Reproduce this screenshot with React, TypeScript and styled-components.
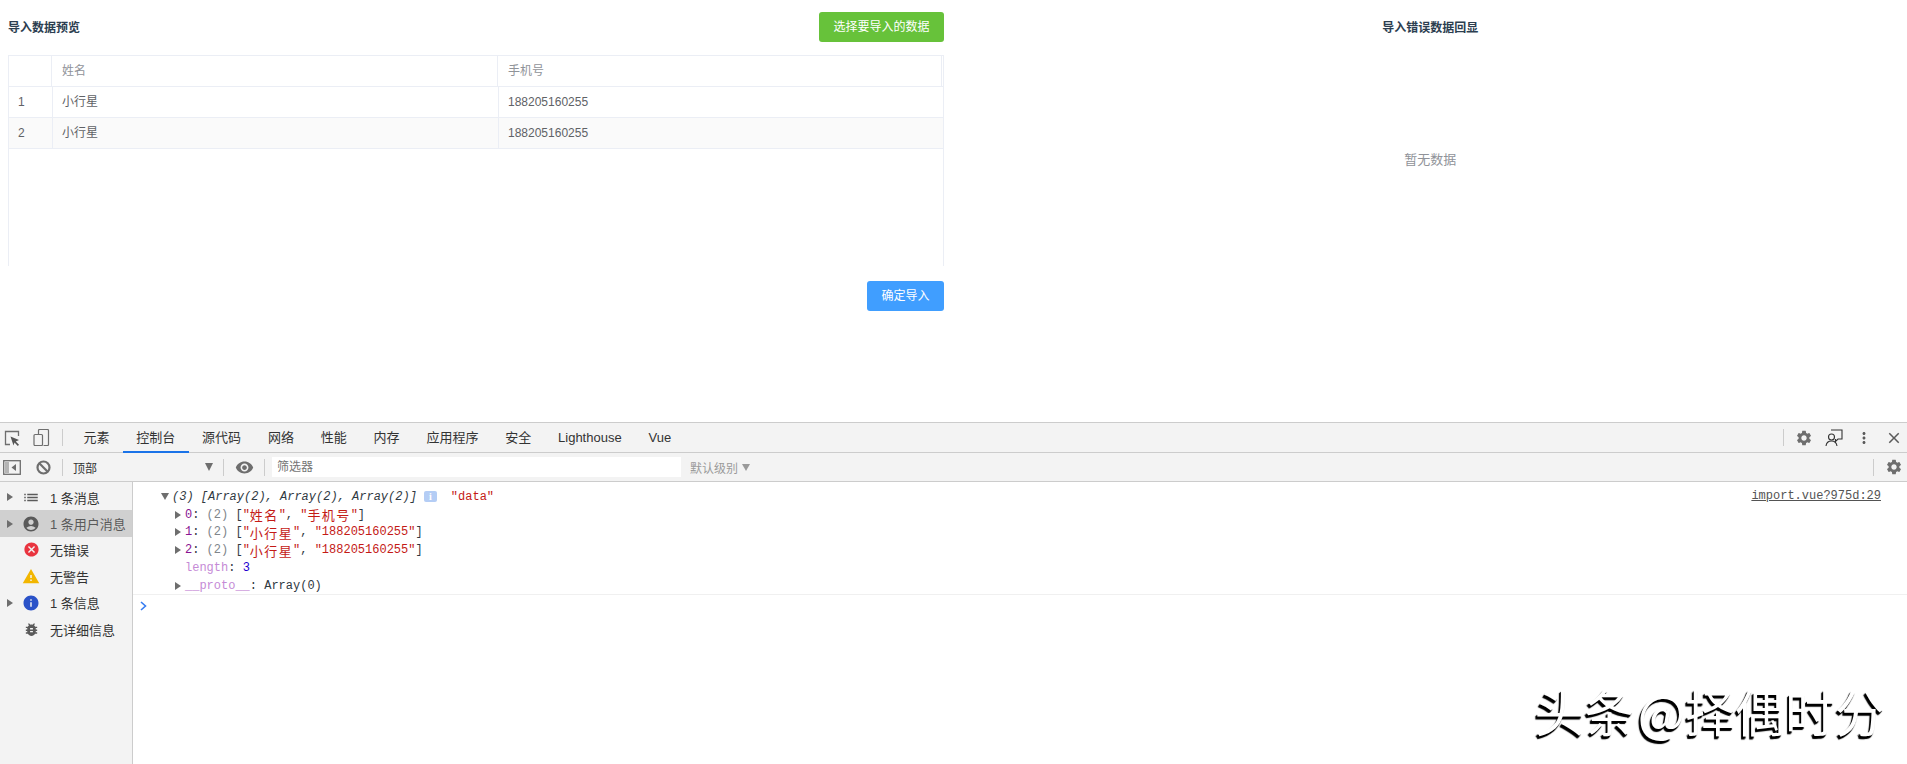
import React from "react";
import styled, { createGlobalStyle } from "styled-components";
import {
  MdSettings, MdMoreVert, MdClose, MdVisibility, MdList,
  MdAccountCircle, MdBugReport, MdCancel, MdWarning, MdInfo,
} from "react-icons/md";

const Global = createGlobalStyle`
  html, body { margin: 0; padding: 0; background: #fff; }
  body { font-family: "Liberation Sans", "Noto Sans CJK SC", sans-serif; }
`;

const Page = styled.div`
  position: relative;
  width: 1907px;
  height: 764px;
  overflow: hidden;
  display: flex;
  flex-direction: column;
`;

const Top = styled.div`
  height: 422px;
  display: grid;
  grid-template-columns: 953.5px 1fr;
  flex: none;
`;

const LeftPanel = styled.section`
  padding: 12px 9.5px 0 8px;
  display: flex;
  flex-direction: column;
`;

const HeaderRow = styled.div`
  display: flex;
  justify-content: space-between;
  align-items: center;
  height: 30px;
  margin-bottom: 13px;
`;

const PanelTitle = styled.h3`
  margin: 0;
  padding-top: 1px;
  font-size: 12px;
  font-weight: 700;
  line-height: 30px;
  color: #2c3e50;
`;

const ActionButton = styled.button<{ $bg: string }>`
  height: 30px;
  padding: 0 14.5px;
  border: 0;
  border-radius: 3px;
  background: ${(p) => p.$bg};
  color: #fff;
  font: inherit;
  font-size: 12px;
  line-height: 30px;
`;

const TableBox = styled.div`
  height: 211px;
  box-sizing: border-box;
  border: 1px solid #ebeef5;
  border-bottom: 0;
`;

const HeadRow = styled.div`
  display: grid;
  grid-template-columns: 43px 446px 1fr;
  height: 31px;
  box-sizing: border-box;
  border-bottom: 1px solid #ebeef5;
  padding-right: 1px;
`;

const HeadCell = styled.div`
  box-sizing: border-box;
  padding: 0 10px;
  border-right: 1px solid #ebeef5;
  font-size: 12px;
  font-weight: 400;
  line-height: 30px;
  color: #909399;
`;

const BodyRow = styled.div<{ $striped?: boolean }>`
  display: grid;
  grid-template-columns: 44px 446px 1fr;
  height: 31px;
  box-sizing: border-box;
  border-bottom: 1px solid #ebeef5;
  background: ${(p) => (p.$striped ? "#fafafa" : "#fff")};
`;

const BodyCell = styled.div`
  box-sizing: border-box;
  padding: 0 9px;
  border-right: 1px solid #ebeef5;
  font-size: 12px;
  line-height: 30px;
  color: #606266;
  &:last-child { border-right: 0; }
`;

const FooterRow = styled.div`
  display: flex;
  justify-content: flex-end;
  margin-top: 15px;
`;

const RightPanel = styled.section`
  padding-top: 12px;
  display: flex;
  flex-direction: column;
  align-items: center;
`;

const EmptyText = styled.div`
  margin-top: 107px;
  font-size: 13px;
  line-height: 20px;
  color: #909399;
`;

const DevTools = styled.div`
  flex: 1;
  display: flex;
  flex-direction: column;
  border-top: 1px solid #cccccc;
  font-family: "Liberation Sans", "Noto Sans CJK SC", sans-serif;
  color: #333;
  min-height: 0;
`;

const TabBar = styled.div`
  height: 29px;
  flex: none;
  display: flex;
  align-items: center;
  background: #f3f3f3;
  border-bottom: 1px solid #cccccc;
`;

const FilterBar = styled.div`
  height: 28px;
  flex: none;
  display: flex;
  align-items: center;
  background: #f3f3f3;
  border-bottom: 1px solid #cccccc;
`;

const Slot = styled.span<{ $left: number; $w: number; $color?: string }>`
  display: inline-flex;
  align-items: center;
  justify-content: center;
  flex: none;
  width: ${(p) => p.$w}px;
  margin-left: ${(p) => p.$left}px;
  color: ${(p) => p.$color ?? "#6e6e6e"};
`;

const Sep = styled.span<{ $left: number }>`
  flex: none;
  width: 1px;
  height: 17px;
  margin-left: ${(p) => p.$left}px;
  background: #cccccc;
`;

const TabList = styled.div`
  display: flex;
  height: 100%;
  margin-left: 7px;
`;

const Tab = styled.div<{ $active?: boolean }>`
  padding: 0 13.42px;
  font-size: 13px;
  line-height: 29px;
  height: 30px;
  box-sizing: border-box;
  color: #333;
  border-bottom: 2px solid ${(p) => (p.$active ? "#1a73e8" : "transparent")};
`;

const Push = styled.div`
  margin-left: auto;
  display: flex;
  align-items: center;
`;

const ContextSelect = styled.div`
  width: 141px;
  margin-left: 10px;
  display: flex;
  justify-content: space-between;
  align-items: center;
  font-size: 12px;
  color: #333;
`;

const SmallArrow = styled.span`
  width: 0;
  height: 0;
  margin-right: 1px;
  border-left: 4.5px solid transparent;
  border-right: 4.5px solid transparent;
  border-top: 8px solid #6e6e6e;
`;

const FilterInput = styled.div`
  width: 409px;
  height: 20px;
  margin-left: 7px;
  padding-left: 5px;
  box-sizing: border-box;
  background: #fff;
  font-size: 12px;
  line-height: 20px;
  color: #757575;
`;

const LevelText = styled.div`
  margin-left: 9px;
  display: flex;
  align-items: center;
  gap: 4px;
  font-size: 12px;
  color: #9a9a9a;
`;

const GreyArrow = styled.span`
  width: 0;
  height: 0;
  border-left: 4.5px solid transparent;
  border-right: 4.5px solid transparent;
  border-top: 7px solid #9a9a9a;
`;

const ConsoleArea = styled.div`
  flex: 1;
  display: grid;
  grid-template-columns: 133px 1fr;
  min-height: 0;
`;

const Sidebar = styled.aside`
  background: #f3f3f3;
  border-right: 1px solid #cccccc;
  padding-top: 2px;
`;

const SideRow = styled.div<{ $selected?: boolean }>`
  height: 26.4px;
  display: grid;
  grid-template-columns: 13px 18px 1fr;
  align-items: center;
  column-gap: 9px;
  background: ${(p) => (p.$selected ? "#d0d0d0" : "transparent")};
  font-size: 13px;
  color: ${(p) => (p.$selected ? "#5a5a5a" : "#333")};
  white-space: nowrap;
`;

const TriCell = styled.span`
  display: flex;
  justify-content: flex-end;
`;

const RightTri = styled.span<{ $hide?: boolean }>`
  width: 0;
  height: 0;
  border-top: 4.5px solid transparent;
  border-bottom: 4.5px solid transparent;
  border-left: 6px solid ${(p) => (p.$hide ? "transparent" : "#6e6e6e")};
`;

const SideIcon = styled.span<{ $color: string }>`
  display: flex;
  align-items: center;
  justify-content: center;
  color: ${(p) => p.$color};
`;

const SideLabel = styled.span`
  margin-left: 1px;
`;

const Output = styled.main`
  background: #fff;
  min-width: 0;
  padding-top: 6px;
  font-family: "Liberation Mono", "Noto Sans CJK SC", monospace;
  font-size: 12px;
  color: #303942;
`;

const Message = styled.div`
  position: relative;
  border-bottom: 1px solid #f0f0f0;
  height: 106px;
`;

const LogLine = styled.div<{ $indent: number }>`
  display: flex;
  align-items: center;
  height: 17.8px;
  padding-left: ${(p) => p.$indent}px;
  white-space: pre;
`;

const DownTri = styled.span`
  width: 0;
  height: 0;
  margin-right: 3px;
  border-left: 4px solid transparent;
  border-right: 4px solid transparent;
  border-top: 7px solid #6e6e6e;
`;

const LineTri = styled.span`
  width: 0;
  height: 0;
  margin-right: 4px;
  border-top: 4.5px solid transparent;
  border-bottom: 4.5px solid transparent;
  border-left: 6px solid #6e6e6e;
`;

const Summary = styled.span`
  font-style: italic;
  color: #303942;
`;

const InfoBadge = styled.span`
  width: 13px;
  height: 11px;
  margin: 0 14px 0 7px;
  border-radius: 2px;
  background: #b4cdf5;
  color: #fff;
  font: 700 10px/11px "Liberation Serif", serif;
  text-align: center;
`;

const Str = styled.span`
  color: #c41a16;
`;

const Cjk = styled.span`
  color: #c41a16;
  font-size: 13px;
  letter-spacing: 1.4px;
`;

const Key = styled.span<{ $dim?: boolean }>`
  color: ${(p) => (p.$dim ? "#c58ad6" : "#881391")};
`;

const Grey = styled.span`
  color: #80868b;
`;

const Num = styled.span`
  color: #1c00cf;
`;

const SourceLink = styled.span`
  position: absolute;
  right: 26px;
  top: 0;
  line-height: 17.8px;
  text-decoration: underline;
  color: #545454;
`;

const Prompt = styled.div`
  padding: 6px 0 0 7px;
  line-height: 0;
  color: #367cf1;
`;

const Watermark = styled.div`
  position: absolute;
  right: 22px;
  bottom: 24px;
  font-family: "Noto Sans CJK SC", sans-serif;
  font-size: 50px;
  font-weight: 400;
  line-height: 60px;
  word-spacing: -8px;
  white-space: pre;
  color: #fff;
  text-shadow: -1px 2px 1px #000, -2px 3px 1px #000;
`;

const InspectIcon = () => (
  <svg width="16" height="16" viewBox="0 0 16 16" fill="none">
    <path d="M6 14.5H1.5V1.5H14.5V6" stroke="#6e6e6e" strokeWidth="1.3" />
    <path d="M6.5 6.5L15 10L11.8 11.5L15 14.8L13.8 16L10.5 12.5L9.5 15.5Z" fill="#555" />
  </svg>
);

const DeviceIcon = () => (
  <svg width="17" height="17" viewBox="0 0 17 17" fill="none">
    <path d="M5.5 5.5V1.5a1 1 0 0 1 1-1h8a1 1 0 0 1 1 1v14a1 1 0 0 1-1 1h-4" stroke="#6e6e6e" strokeWidth="1.2" />
    <rect x="1" y="5.5" width="8.5" height="11" rx="1" stroke="#6e6e6e" strokeWidth="1.2" />
  </svg>
);

const FeedbackIcon = () => (
  <svg width="18" height="18" viewBox="0 0 18 18" fill="none">
    <path d="M6 1H17V10H13L10.5 12.5V10" stroke="#333" strokeWidth="1.1" />
    <circle cx="6.5" cy="8" r="3" stroke="#333" strokeWidth="1.1" />
    <path d="M1 17c.4-3.2 2.6-5 5.5-5s5 1.8 5.5 5" stroke="#333" strokeWidth="1.1" />
  </svg>
);

const DockIcon = () => (
  <svg width="18" height="15" viewBox="0 0 18 15" fill="none">
    <rect x="0.7" y="0.7" width="16.6" height="13.6" stroke="#6e6e6e" strokeWidth="1.3" />
    <rect x="2" y="2" width="4" height="11" fill="#b5b5b5" />
    <path d="M13 4V11L8.5 7.5Z" fill="#6e6e6e" />
  </svg>
);

const BlockIcon = () => (
  <svg width="15" height="15" viewBox="0 0 15 15" fill="none">
    <circle cx="7.5" cy="7.5" r="6" stroke="#6e6e6e" strokeWidth="2.2" />
    <path d="M3.3 3.3L11.7 11.7" stroke="#6e6e6e" strokeWidth="2.2" />
  </svg>
);

const Chevron = () => (
  <svg width="7" height="10" viewBox="0 0 7 10" fill="none">
    <path d="M1 1L5.5 5L1 9" stroke="#367cf1" strokeWidth="1.6" />
  </svg>
);

const tabs = ["元素", "控制台", "源代码", "网络", "性能", "内存", "应用程序", "安全", "Lighthouse", "Vue"];

const sideItems = [
  { label: "1 条消息", color: "#5a5a5a", icon: <MdList size={19} />, tri: true },
  { label: "1 条用户消息", color: "#5a5a5a", icon: <MdAccountCircle size={18} />, tri: true, selected: true },
  { label: "无错误", color: "#e9343f", icon: <MdCancel size={17} />, tri: false },
  { label: "无警告", color: "#f2b600", icon: <MdWarning size={19} />, tri: false },
  { label: "1 条信息", color: "#2a52c8", icon: <MdInfo size={18} />, tri: true },
  { label: "无详细信息", color: "#5a5a5a", icon: <MdBugReport size={17} />, tri: false },
];

const rows = [
  { id: 1, name: "小行星", phone: "188205160255" },
  { id: 2, name: "小行星", phone: "188205160255" },
];

export default function App() {
  return (
    <Page>
      <Global />
      <Top>
        <LeftPanel>
          <HeaderRow>
            <PanelTitle>导入数据预览</PanelTitle>
            <ActionButton $bg="#67c23a">选择要导入的数据</ActionButton>
          </HeaderRow>
          <TableBox>
            <HeadRow>
              <HeadCell />
              <HeadCell>姓名</HeadCell>
              <HeadCell>手机号</HeadCell>
            </HeadRow>
            {rows.map((r, i) => (
              <BodyRow key={r.id} $striped={i % 2 === 1}>
                <BodyCell>{r.id}</BodyCell>
                <BodyCell>{r.name}</BodyCell>
                <BodyCell>{r.phone}</BodyCell>
              </BodyRow>
            ))}
          </TableBox>
          <FooterRow>
            <ActionButton $bg="#409eff">确定导入</ActionButton>
          </FooterRow>
        </LeftPanel>
        <RightPanel>
          <PanelTitle>导入错误数据回显</PanelTitle>
          <EmptyText>暂无数据</EmptyText>
        </RightPanel>
      </Top>
      <DevTools>
        <TabBar>
          <Slot $left={4} $w={16}><InspectIcon /></Slot>
          <Slot $left={13} $w={17}><DeviceIcon /></Slot>
          <Sep $left={12} />
          <TabList>
            {tabs.map((t) => (
              <Tab key={t} $active={t === "控制台"}>{t}</Tab>
            ))}
          </TabList>
          <Push>
            <Sep $left={0} />
            <Slot $left={11} $w={18}><MdSettings size={20} /></Slot>
            <Slot $left={12} $w={18}><FeedbackIcon /></Slot>
            <Slot $left={12} $w={18} $color="#5a5a5a"><MdMoreVert size={20} /></Slot>
            <Slot $left={12} $w={18} $color="#5a5a5a"><MdClose size={18} /></Slot>
            <Slot $left={0} $w={4} />
          </Push>
        </TabBar>
        <FilterBar>
          <Slot $left={3} $w={18}><DockIcon /></Slot>
          <Slot $left={13} $w={18}><BlockIcon /></Slot>
          <Sep $left={10} />
          <ContextSelect>
            顶部
            <SmallArrow />
          </ContextSelect>
          <Sep $left={9} />
          <Slot $left={10} $w={20}><MdVisibility size={19} /></Slot>
          <Sep $left={10} />
          <FilterInput>筛选器</FilterInput>
          <LevelText>
            默认级别
            <GreyArrow />
          </LevelText>
          <Push>
            <Sep $left={0} />
            <Slot $left={11} $w={18}><MdSettings size={20} /></Slot>
            <Slot $left={0} $w={4} />
          </Push>
        </FilterBar>
        <ConsoleArea>
          <Sidebar>
            {sideItems.map((s) => (
              <SideRow key={s.label} $selected={s.selected}>
                <TriCell>
                  <RightTri $hide={!s.tri} />
                </TriCell>
                <SideIcon $color={s.color}>{s.icon}</SideIcon>
                <SideLabel>{s.label}</SideLabel>
              </SideRow>
            ))}
          </Sidebar>
          <Output>
            <Message>
              <SourceLink>import.vue?975d:29</SourceLink>
              <LogLine $indent={28}>
                <DownTri />
                <Summary>(3) [Array(2), Array(2), Array(2)]</Summary>
                <InfoBadge>i</InfoBadge>
                <Str>"data"</Str>
              </LogLine>
              <LogLine $indent={42}>
                <LineTri /><Key>0</Key>: <Grey>(2)</Grey> [<Str>"</Str><Cjk>姓名</Cjk><Str>"</Str>, <Str>"</Str><Cjk>手机号</Cjk><Str>"</Str>]
              </LogLine>
              <LogLine $indent={42}>
                <LineTri /><Key>1</Key>: <Grey>(2)</Grey> [<Str>"</Str><Cjk>小行星</Cjk><Str>"</Str>, <Str>"188205160255"</Str>]
              </LogLine>
              <LogLine $indent={42}>
                <LineTri /><Key>2</Key>: <Grey>(2)</Grey> [<Str>"</Str><Cjk>小行星</Cjk><Str>"</Str>, <Str>"188205160255"</Str>]
              </LogLine>
              <LogLine $indent={52}>
                <Key $dim>length</Key>: <Num>3</Num>
              </LogLine>
              <LogLine $indent={42}>
                <LineTri /><Key $dim>__proto__</Key>: Array(0)
              </LogLine>
            </Message>
            <Prompt><Chevron /></Prompt>
          </Output>
        </ConsoleArea>
      </DevTools>
      <Watermark>头条 @择偶时分</Watermark>
    </Page>
  );
}
